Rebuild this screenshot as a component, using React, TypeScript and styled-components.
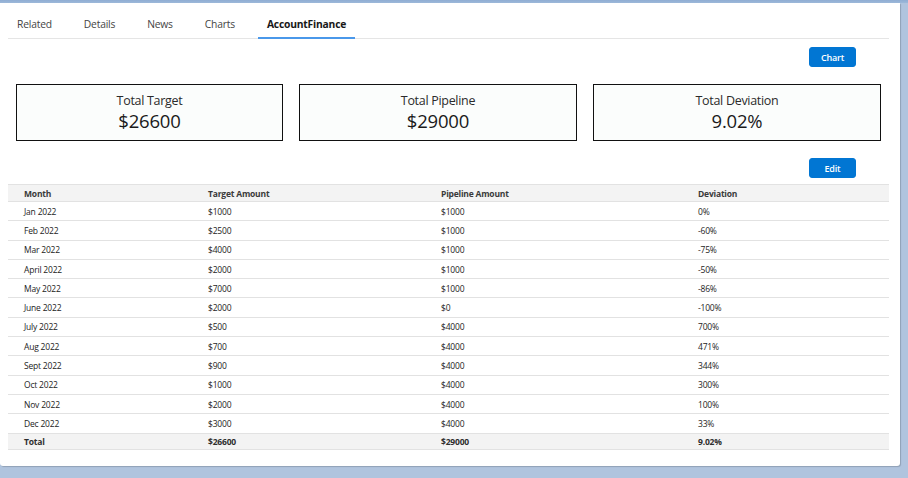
import React from "react";
import styled, { createGlobalStyle } from "styled-components";

const Global = createGlobalStyle`
  html, body { margin: 0; padding: 0; }
  body {
    background: #b0c4de;
    font-family: "Open Sans", "Noto Sans", sans-serif;
    color: #181818;
  }
`;

const Page = styled.div`
  padding-top: 3px;
  width: 908px;
  height: 475px;
  background: linear-gradient(#8fadd3 0, #9db8d9 3px, #b0c4de 3px);
`;

const Card = styled.div`
  width: 900px;
  height: 463px;
  background: #fff;
  box-sizing: border-box;
  padding: 0 11px 0 8px;
  border-radius: 0 0 3px 3px;
  box-shadow: 1px 1px 1px rgba(0, 0, 0, 0.18);
  display: flex;
  flex-direction: column;
`;

const TabBar = styled.div`
  display: flex;
  height: 35px;
  border-bottom: 1px solid #e5e5e5;
  gap: 14px;
`;

const Tab = styled.div<{ $active?: boolean }>`
  padding: 14px 9px 0;
  font-size: 10.3px;
  line-height: 15px;
  box-sizing: border-box;
  height: 36px;
  color: ${(p) => (p.$active ? "#181818" : "#444")};
  font-weight: ${(p) => (p.$active ? 700 : 400)};
  border-bottom: 2px solid ${(p) => (p.$active ? "#4a98ea" : "transparent")};
  letter-spacing: -0.2px;
`;

const ButtonRow = styled.div<{ $top: number }>`
  display: flex;
  justify-content: flex-end;
  padding-right: 33px;
  margin-top: ${(p) => p.$top}px;
`;

const Button = styled.button`
  width: 47px;
  height: 20px;
  background: #0176d3;
  border: 1px solid #0176d3;
  border-radius: 3px;
  color: #fff;
  font-family: "Open Sans", sans-serif;
  font-size: 9px;
  font-weight: 600;
  padding: 0;
  letter-spacing: -0.2px;
`;

const Summary = styled.div`
  display: grid;
  grid-template-columns: 267fr 278fr 288fr;
  gap: 16px;
  padding: 0 8px;
  margin-top: 17px;
`;

const StatBox = styled.div`
  height: 57px;
  box-sizing: border-box;
  border: 1.5px solid #111;
  background: #fbfdfc;
  display: flex;
  flex-direction: column;
  align-items: center;
  padding-top: 9px;
`;

const StatLabel = styled.div`
  font-size: 12.5px;
  line-height: 14px;
  color: #2b2b2b;
  letter-spacing: -0.3px;
`;

const StatValue = styled.div`
  margin-top: 2px;
  font-size: 18.5px;
  line-height: 22px;
  color: #1a1a1a;
  letter-spacing: -0.2px;
`;

const Table = styled.table`
  margin-top: 6px;
  width: 881px;
  border-collapse: collapse;
  table-layout: fixed;
  font-size: 8.5px;
  letter-spacing: -0.2px;
`;

const Th = styled.th`
  text-align: left;
  font-weight: 700;
  color: #3a3a3a;
  background: #f3f3f3;
  height: 16px;
  padding: 0 0 0 16px;
  border-top: 1px solid #e2e2e2;
  border-bottom: 1px solid #e2e2e2;
`;

const Tr = styled.tr<{ $total?: boolean }>`
  background: ${(p) => (p.$total ? "#f3f3f3" : "#fff")};
  font-weight: ${(p) => (p.$total ? 700 : 400)};
  color: ${(p) => (p.$total ? "#2e2e2e" : "#1c1c1c")};
`;

const Td = styled.td<{ $total?: boolean }>`
  height: ${(p) => (p.$total ? 15 : 18.3)}px;
  padding: 0 0 0 16px;
  border-bottom: 1px solid #e2e2e2;
  white-space: nowrap;
`;

const rows: [string, string, string, string][] = [
  ["Jan 2022", "$1000", "$1000", "0%"],
  ["Feb 2022", "$2500", "$1000", "-60%"],
  ["Mar 2022", "$4000", "$1000", "-75%"],
  ["April 2022", "$2000", "$1000", "-50%"],
  ["May 2022", "$7000", "$1000", "-86%"],
  ["June 2022", "$2000", "$0", "-100%"],
  ["July 2022", "$500", "$4000", "700%"],
  ["Aug 2022", "$700", "$4000", "471%"],
  ["Sept 2022", "$900", "$4000", "344%"],
  ["Oct 2022", "$1000", "$4000", "300%"],
  ["Nov 2022", "$2000", "$4000", "100%"],
  ["Dec 2022", "$3000", "$4000", "33%"],
];

const tabs = ["Related", "Details", "News", "Charts", "AccountFinance"];

export default function App() {
  return (
    <>
      <Global />
      <Page>
        <Card>
          <TabBar>
            {tabs.map((t) => (
              <Tab key={t} $active={t === "AccountFinance"}>
                {t}
              </Tab>
            ))}
          </TabBar>
          <ButtonRow $top={8}>
            <Button>Chart</Button>
          </ButtonRow>
          <Summary>
            <StatBox>
              <StatLabel>Total Target</StatLabel>
              <StatValue>$26600</StatValue>
            </StatBox>
            <StatBox>
              <StatLabel>Total Pipeline</StatLabel>
              <StatValue>$29000</StatValue>
            </StatBox>
            <StatBox>
              <StatLabel>Total Deviation</StatLabel>
              <StatValue>9.02%</StatValue>
            </StatBox>
          </Summary>
          <ButtonRow $top={17}>
            <Button>Edit</Button>
          </ButtonRow>
          <Table>
            <colgroup>
              <col style={{ width: 184 }} />
              <col style={{ width: 233 }} />
              <col style={{ width: 257 }} />
              <col style={{ width: 207 }} />
            </colgroup>
            <thead>
              <tr>
                <Th>Month</Th>
                <Th>Target Amount</Th>
                <Th>Pipeline Amount</Th>
                <Th>Deviation</Th>
              </tr>
            </thead>
            <tbody>
              {rows.map((r) => (
                <Tr key={r[0]}>
                  {r.map((c, i) => (
                    <Td key={i}>{c}</Td>
                  ))}
                </Tr>
              ))}
              <Tr $total>
                <Td $total>Total</Td>
                <Td $total>$26600</Td>
                <Td $total>$29000</Td>
                <Td $total>9.02%</Td>
              </Tr>
            </tbody>
          </Table>
        </Card>
      </Page>
    </>
  );
}
